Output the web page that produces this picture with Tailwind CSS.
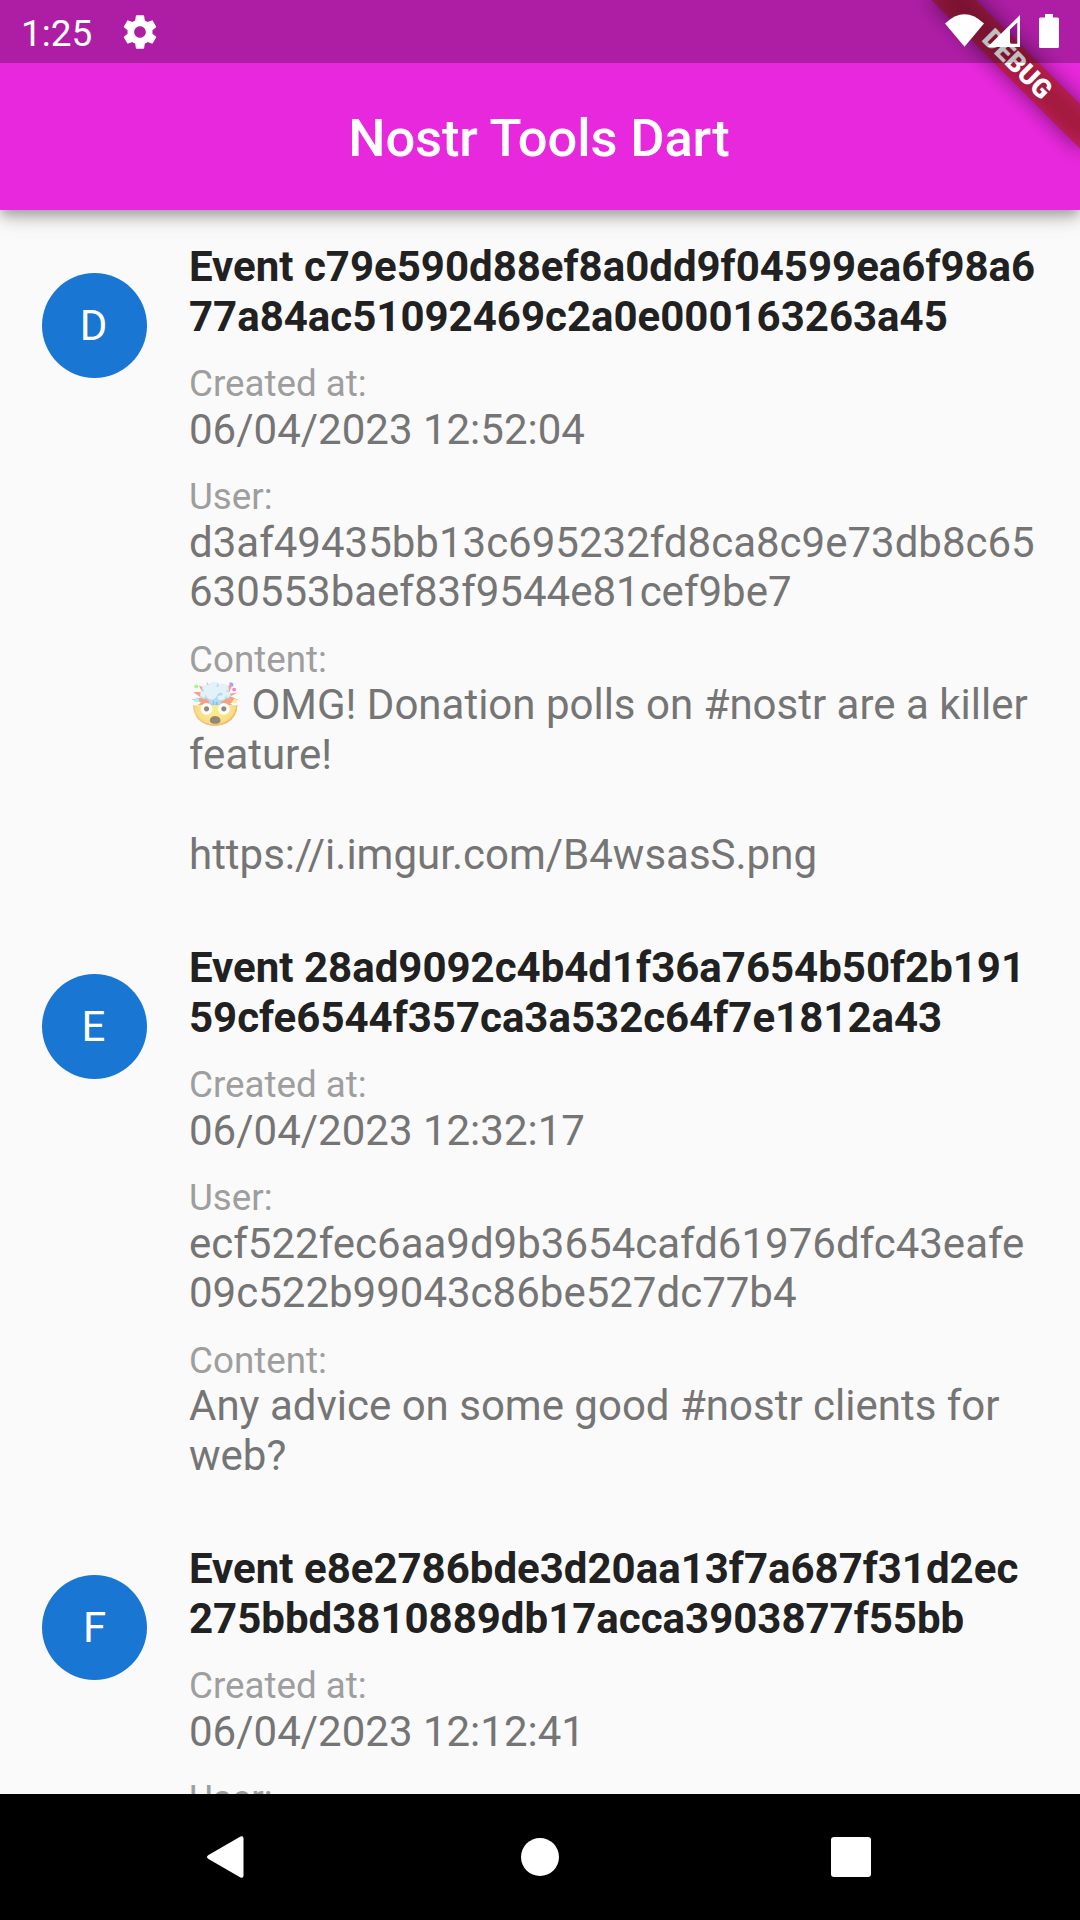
<!DOCTYPE html>
<html lang="en">
<head>
<meta charset="utf-8">
<title>Nostr Tools Dart</title>
<script src="https://cdn.jsdelivr.net/npm/@tailwindcss/browser@4"></script>
</head>
<body class="bg-[#fafafa]">
<div class="relative flex h-[1920px] w-[1080px] flex-col overflow-hidden bg-[#fafafa] font-['Roboto',sans-serif]">
  <header class="relative z-10 h-[210px] shrink-0 bg-[#e828dd] pt-[64px] shadow-[0_5px_10px_-2px_rgba(0,0,0,0.2),0_10px_13px_rgba(0,0,0,0.14),0_3px_26px_rgba(0,0,0,0.12)]">
    <h1 class="pr-[2px] text-center text-[52.5px] leading-[149px] font-medium tracking-[-0.12px] text-white">Nostr Tools Dart</h1>
    <!-- Debug ribbon -->
    <svg class="absolute top-0 right-0" width="180" height="180" viewBox="0 0 180 180">
      <defs><filter id="blur" x="-50%" y="-150%" width="200%" height="400%"><feGaussianBlur stdDeviation="10.4"/></filter></defs>
      <g transform="translate(180 0) rotate(45)">
        <rect x="-105" y="73.5" width="210" height="31.5" fill="#000" fill-opacity=".5" filter="url(#blur)"/>
        <rect x="-105" y="73.5" width="210" height="31.5" fill="#b71c1c" fill-opacity=".63"/>
        <text x="1" y="98.7" text-anchor="middle" font-family="Roboto" font-weight="900" font-size="26.8" fill="#fff">DEBUG</text>
      </g>
    </svg>
    <!-- Status bar -->
    <div class="absolute inset-x-0 top-0 flex h-[63px] items-center bg-black/25 pl-[21px] text-white">
      <span class="pt-[4px] text-[37px] leading-[44px]">1:25</span>
      <svg class="ml-[28px]" width="40" height="40" viewBox="0 0 24 24" fill="#fff"><path d="M19.43 12.98c.04-.32.07-.64.07-.98s-.03-.66-.07-.98l2.11-1.65c.19-.15.24-.42.12-.64l-2-3.46c-.12-.22-.39-.3-.61-.22l-2.49 1c-.52-.4-1.08-.73-1.69-.98l-.38-2.65C14.46 2.18 14.25 2 14 2h-4c-.25 0-.46.18-.49.42l-.38 2.65c-.61.25-1.17.59-1.69.98l-2.49-1c-.23-.09-.49 0-.61.22l-2 3.46c-.13.22-.07.49.12.64l2.11 1.65c-.04.32-.07.65-.07.98s.03.66.07.98l-2.11 1.65c-.19.15-.24.42-.12.64l2 3.46c.12.22.39.3.61.22l2.49-1c.52.4 1.08.73 1.69.98l.38 2.65c.03.24.24.42.49.42h4c.25 0 .46-.18.49-.42l.38-2.65c.61-.25 1.17-.59 1.69-.98l2.49 1c.23.09.49 0 .61-.22l2-3.46c.12-.22.07-.49-.12-.64l-2.11-1.65zM12 15.5c-1.93 0-3.5-1.57-3.5-3.5s1.57-3.5 3.5-3.5 3.5 1.57 3.5 3.5-1.57 3.5-3.5 3.5z"/></svg>
      <svg class="ml-auto" width="135" height="63" viewBox="0 0 135 63" fill="#fff">
        <path d="M0 23.500Q19.500 5 39 23.500L19.500 46.700Z"/>
        <path fill-rule="evenodd" d="M75 15V47H42.500ZM72.300 22.500L65 29.500V43.800H72.300Z"/>
        <path d="M100 14h8v3.500h4.500q1.500 0 1.500 1.500V46.500q0 1.500-1.500 1.500h-17q-1.500 0-1.500-1.500V19q0-1.500 1.500-1.500h4.500Z"/>
      </svg>
    </div>
  </header>

  <main class="flex min-h-0 flex-1 flex-col overflow-hidden text-[42px] leading-[49px] text-[#757575]">
    <article class="flex h-[701px] shrink-0 items-start gap-[42px] pt-[32px] pl-[42px]">
      <div class="mt-[31px] flex size-[105px] shrink-0 items-center justify-center rounded-full bg-[#1976d2] pr-[2px] text-white">D</div>
      <div class="flex flex-col gap-[21px] whitespace-nowrap">
        <h2 class="-mb-px leading-[50px] font-bold text-[#212121]">Event c79e590d88ef8a0dd9f04599ea6f98a6<br>77a84ac51092469c2a0e000163263a45</h2>
        <div><p class="text-[36.75px] leading-[43px] text-[#9e9e9e]">Created at:</p><p>06/04/2023 12:52:04</p></div>
        <div><p class="text-[36.75px] leading-[43px] text-[#9e9e9e]">User:</p><p>d3af49435bb13c695232fd8ca8c9e73db8c65<br>630553baef83f9544e81cef9be7</p></div>
        <div class="pt-px"><p class="-mb-px text-[36.75px] leading-[43px] text-[#9e9e9e]">Content:</p><p class="leading-[50px]"><span class="opacity-55">🤯</span> OMG! Donation polls on #nostr are a killer<br>feature!<br><br>https://i.imgur.com/B4wsasS.png</p></div>
      </div>
    </article>
    <article class="flex h-[601px] shrink-0 items-start gap-[42px] pt-[32px] pl-[42px]">
      <div class="mt-[31px] flex size-[105px] shrink-0 items-center justify-center rounded-full bg-[#1976d2] pr-[2px] text-white">E</div>
      <div class="flex flex-col gap-[21px] whitespace-nowrap">
        <h2 class="-mb-px leading-[50px] font-bold text-[#212121]">Event 28ad9092c4b4d1f36a7654b50f2b191<br>59cfe6544f357ca3a532c64f7e1812a43</h2>
        <div><p class="text-[36.75px] leading-[43px] text-[#9e9e9e]">Created at:</p><p>06/04/2023 12:32:17</p></div>
        <div><p class="text-[36.75px] leading-[43px] text-[#9e9e9e]">User:</p><p>ecf522fec6aa9d9b3654cafd61976dfc43eafe<br>09c522b99043c86be527dc77b4</p></div>
        <div class="pt-px"><p class="-mb-px text-[36.75px] leading-[43px] text-[#9e9e9e]">Content:</p><p class="leading-[50px]">Any advice on some good #nostr clients for<br>web?</p></div>
      </div>
    </article>
    <article class="flex shrink-0 items-start gap-[42px] pt-[32px] pl-[42px]">
      <div class="mt-[31px] flex size-[105px] shrink-0 items-center justify-center rounded-full bg-[#1976d2] text-white">F</div>
      <div class="flex flex-col gap-[21px] whitespace-nowrap">
        <h2 class="-mb-px leading-[50px] font-bold text-[#212121]">Event e8e2786bde3d20aa13f7a687f31d2ec<br>275bbd3810889db17acca3903877f55bb</h2>
        <div><p class="text-[36.75px] leading-[43px] text-[#9e9e9e]">Created at:</p><p>06/04/2023 12:12:41</p></div>
        <div><p class="text-[36.75px] leading-[43px] text-[#9e9e9e]">User:</p></div>
      </div>
    </article>
  </main>

  <nav class="h-[126px] shrink-0 bg-black">
    <svg width="1080" height="126" viewBox="0 0 1080 126" fill="#fff">
      <path d="M208.500 61L240.500 42.600Q243.500 41.500 243.500 44.500V81.500Q243.500 84.500 240.500 83.400L208.500 65Q205.500 63 208.500 61Z"/>
      <circle cx="540" cy="63" r="19"/>
      <rect x="831" y="43" width="40" height="40" rx="3"/>
    </svg>
  </nav>
</div>
</body>
</html>
